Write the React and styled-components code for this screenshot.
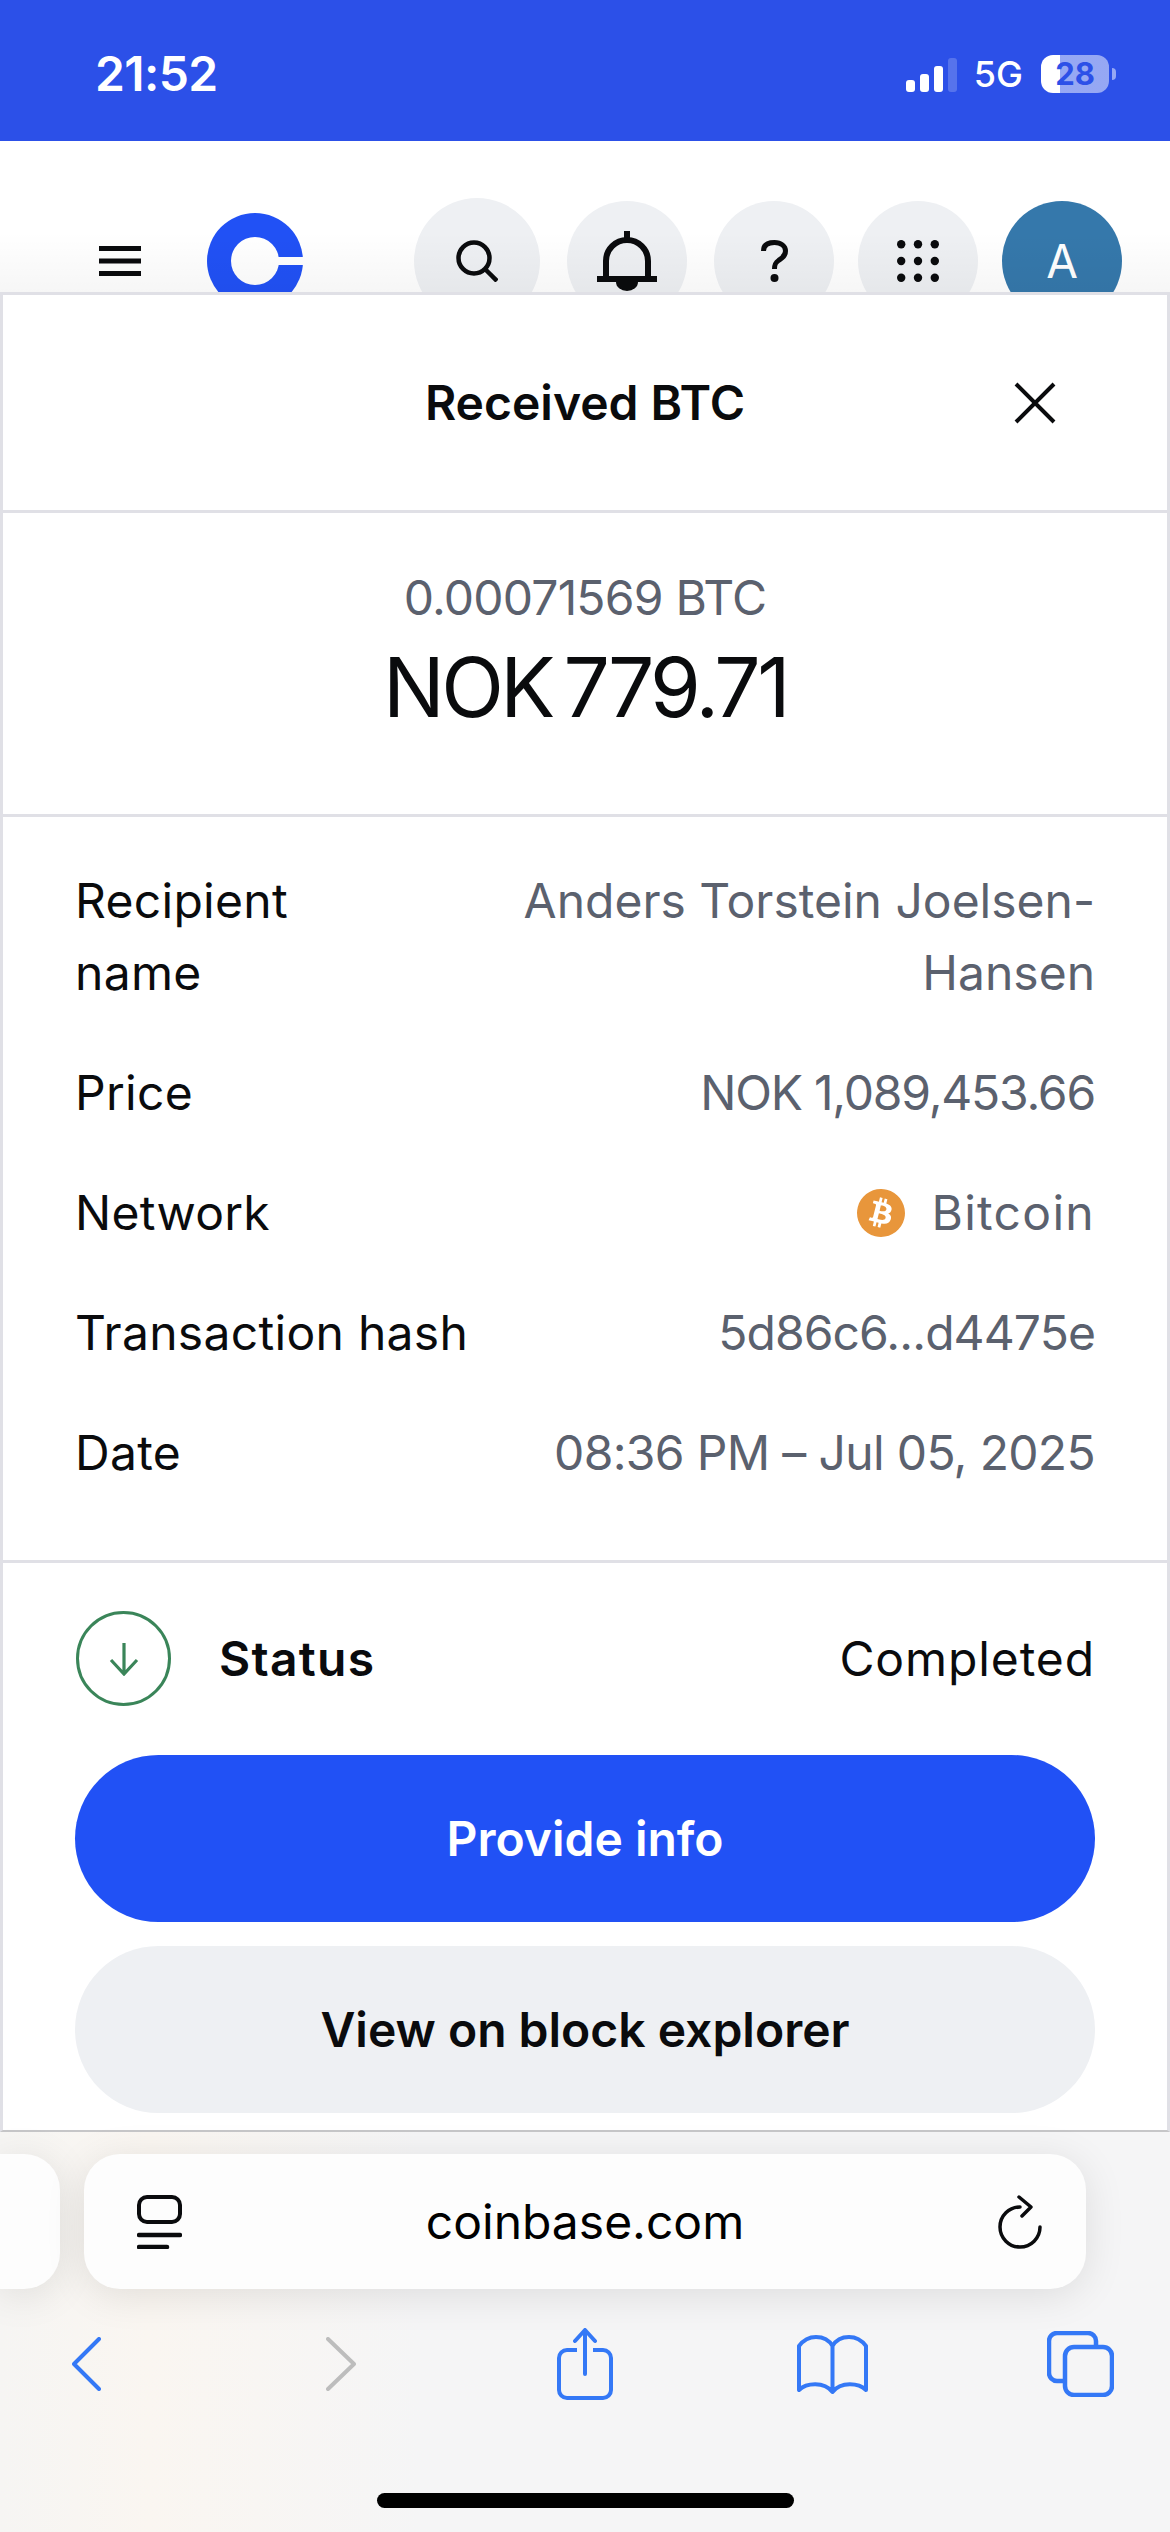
import styled, { createGlobalStyle } from 'styled-components';
import { SiBitcoin } from 'react-icons/si';

const GlobalStyle = createGlobalStyle`
  html, body {
    margin: 0;
    padding: 0;
    background: #fff;
    font-family: Inter, "Liberation Sans", sans-serif;
    color: #0a0b0d;
  }
`;

const details = [
  { label: <>Recipient<br />name</>, value: 'Anders Torstein Joelsen-Hansen' },
  { label: 'Price', value: 'NOK 1,089,453.66', tracking: -1.2 },
  { label: 'Network', value: 'Bitcoin', tracking: 1.3, coin: true },
  { label: 'Transaction hash', value: '5d86c6...d4475e', tracking: -0.9 },
  { label: 'Date', value: '08:36 PM – Jul 05, 2025', tracking: -0.66 },
];

const gridDots = [4.2, 21, 37.8];

function App() {
  return (
    <Page>
      <GlobalStyle />
      <StatusBar>
        <Clock>21:52</Clock>
        <StatusRight>
          <Signal>
            <SignalBar $h={12} />
            <SignalBar $h={18} />
            <SignalBar $h={26} />
            <SignalBar $h={34} $dim />
          </Signal>
          <NetworkType>5G</NetworkType>
          <Battery>
            <BatteryBody>28</BatteryBody>
            <BatteryNub />
          </Battery>
        </StatusRight>
      </StatusBar>

      <Header>
        <HeaderRow>
          <svg width="42" height="30" viewBox="0 0 42 30">
            <rect width="42" height="5" fill="#0a0b0d" />
            <rect y="12.5" width="42" height="5" fill="#0a0b0d" />
            <rect y="25" width="42" height="5" fill="#0a0b0d" />
          </svg>
          <LogoWrap>
            <svg width="96" height="96" viewBox="0 0 96 96">
              <circle cx="48" cy="48" r="48" fill="#2151f5" />
              <circle cx="48" cy="48" r="24" fill="#fff" />
              <rect x="60" y="44" width="36" height="8" fill="#fff" />
            </svg>
          </LogoWrap>
          <HeaderActions>
            <RoundButton $size={126} $after={3}>
              <svg width="42" height="42" viewBox="0 0 42 42" fill="none" stroke="#0a0b0d" strokeWidth="4.5">
                <circle cx="18" cy="18" r="15.5" />
                <path d="M29 29 L41 41" />
              </svg>
            </RoundButton>
            <RoundButton $size={120} $after={3}>
              <svg width="60" height="60" viewBox="0 0 60 60">
                <rect x="27" width="6" height="10" fill="#0a0b0d" />
                <path d="M9 48 V30 a21 21 0 0 1 42 0 V48" fill="none" stroke="#0a0b0d" strokeWidth="6" />
                <rect y="45" width="60" height="6" fill="#0a0b0d" />
                <path d="M19 51 a11 9 0 0 0 22 0 Z" fill="#0a0b0d" />
              </svg>
            </RoundButton>
            <RoundButton $size={120}>
              <svg width="27" height="42" viewBox="0 0 27 42" fill="none">
                <path d="M2.5 11 C2.5 5 7 2.5 13.5 2.5 C20 2.5 24.5 6 24.5 11 C24.5 16 21 18 17.5 20.5 C14.5 22.5 13.5 24 13.5 29" stroke="#0a0b0d" strokeWidth="5" />
                <circle cx="13.5" cy="38" r="4" fill="#0a0b0d" />
              </svg>
            </RoundButton>
            <RoundButton $size={120}>
              <svg width="42" height="42" viewBox="0 0 42 42" fill="#0a0b0d">
                {gridDots.flatMap((y) =>
                  gridDots.map((x) => <circle key={`${x}-${y}`} cx={x} cy={y} r="4.2" />)
                )}
              </svg>
            </RoundButton>
            <Avatar>A</Avatar>
          </HeaderActions>
        </HeaderRow>
      </Header>

      <Modal>
        <TitleBar>
          <span />
          <Title>Received BTC</Title>
          <CloseIcon width="42" height="42" viewBox="0 0 42 42" fill="none" stroke="#0a0b0d" strokeWidth="4">
            <path d="M2 2 L40 40 M40 2 L2 40" />
          </CloseIcon>
        </TitleBar>

        <AmountBlock>
          <CryptoAmount>0.00071569 BTC</CryptoAmount>
          <FiatAmount>NOK 779.71</FiatAmount>
        </AmountBlock>

        <DetailList>
          {details.map((row, i) => (
            <DetailRow key={i}>
              <DetailLabel>{row.label}</DetailLabel>
              <DetailValue $tracking={row.tracking || 0}>
                {row.coin && (
                  <CoinBadge>
                    <SiBitcoin size={48} color="#e8963b" />
                  </CoinBadge>
                )}
                {row.value}
              </DetailValue>
            </DetailRow>
          ))}
        </DetailList>

        <Footer>
          <StatusRow>
            <StatusCircle>
              <svg width="30" height="34" viewBox="0 0 30 34" fill="none" stroke="#3a8559" strokeWidth="3.2">
                <path d="M15 1 V31 M2 18 L15 32 L28 18" />
              </svg>
            </StatusCircle>
            <StatusLabel>Status</StatusLabel>
            <StatusValue>Completed</StatusValue>
          </StatusRow>
          <ActionButton $primary>Provide info</ActionButton>
          <ActionButton>View on block explorer</ActionButton>
        </Footer>
      </Modal>

      <BrowserChrome>
        <UrlRow>
          <PrevTab />
          <UrlBar>
            <PagesIcon width="45" height="54" viewBox="0 0 45 54" fill="none" stroke="#0a0b0d" strokeWidth="4">
              <rect x="2" y="2" width="41" height="25" rx="8" />
              <path d="M2 40 H43" strokeWidth="4.5" strokeLinecap="round" />
              <path d="M2 52 H30" strokeWidth="4.5" strokeLinecap="round" />
            </PagesIcon>
            <UrlText>coinbase.com</UrlText>
            <ReloadIcon width="44" height="54" viewBox="0 0 44 54" fill="none" stroke="#0a0b0d" strokeWidth="3.5" strokeLinecap="round" strokeLinejoin="round">
              <path d="M42 32 A20 20 0 1 1 22 12" />
              <path d="M21 2 L33 12 L24 21" />
            </ReloadIcon>
          </UrlBar>
        </UrlRow>

        <Toolbar>
          <svg width="29" height="54" viewBox="0 0 29 54" fill="none" stroke="#3478f6" strokeWidth="4" strokeLinecap="round" strokeLinejoin="round">
            <path d="M27 2 L2 27 L27 52" />
          </svg>
          <svg width="30" height="54" viewBox="0 0 30 54" fill="none" stroke="#bdbdbd" strokeWidth="4" strokeLinecap="round" strokeLinejoin="round">
            <path d="M2 2 L28 27 L2 52" />
          </svg>
          <svg width="56" height="72" viewBox="0 0 56 72" fill="none" stroke="#3478f6" strokeWidth="4" strokeLinejoin="round" strokeLinecap="round">
            <path d="M20 22 H10 a8 8 0 0 0 -8 8 V62 a8 8 0 0 0 8 8 H46 a8 8 0 0 0 8 -8 V30 a8 8 0 0 0 -8 -8 H36" strokeLinecap="butt" />
            <path d="M28 3 V46 M18 13 L28 2 L38 13" />
          </svg>
          <svg width="71" height="60" viewBox="0 0 71 60" fill="none" stroke="#3478f6" strokeWidth="4" strokeLinejoin="round">
            <path d="M2 12 C8 4 14 3 19 3 C26 3 32 6 35.5 12 C39 6 45 3 52 3 C57 3 63 4 69 12 V56 C62 49 44 47 35.5 58 C27 47 9 49 2 56 Z M35.5 12 V58" />
          </svg>
          <svg width="67" height="66" viewBox="0 0 67 66" fill="none" stroke="#3478f6" strokeWidth="4.5">
            <path d="M16 50 H10 a8 8 0 0 1 -8 -8 V10 a8 8 0 0 1 8 -8 H41 a8 8 0 0 1 8 8 V14" />
            <rect x="18" y="16" width="47" height="48" rx="9" />
          </svg>
        </Toolbar>

        <HomeIndicator />
      </BrowserChrome>
    </Page>
  );
}

const Page = styled.div`
  width: 1170px;
  height: 2532px;
  display: flex;
  flex-direction: column;
  overflow: hidden;
  background: #fff;
`;

const StatusBar = styled.div`
  flex: 0 0 141px;
  display: flex;
  align-items: flex-start;
  justify-content: space-between;
  padding: 0 54px 0 95px;
  background: #2c50e8;
  color: #fff;
  box-sizing: border-box;
`;

const Clock = styled.div`
  margin-top: 46px;
  font-size: 48px;
  line-height: 56px;
  font-weight: 600;
  letter-spacing: -0.6px;
`;

const StatusRight = styled.div`
  display: flex;
  align-items: center;
  margin-top: 55px;
  height: 38px;
`;

const Signal = styled.div`
  display: flex;
  align-items: flex-end;
  gap: 5px;
  height: 34px;
  margin-top: 2px;
`;

const SignalBar = styled.div`
  width: 9px;
  height: ${(p) => p.$h}px;
  border-radius: 3px;
  background: ${(p) => (p.$dim ? 'rgba(255, 255, 255, 0.2)' : '#fff')};
`;

const NetworkType = styled.div`
  margin: 0 18px 0 17px;
  font-size: 36px;
  line-height: 38px;
  font-weight: 500;
`;

const Battery = styled.div`
  display: flex;
  align-items: center;
  gap: 3px;
`;

const BatteryBody = styled.div`
  width: 68px;
  height: 38px;
  border-radius: 12px;
  background: linear-gradient(90deg, #fff 28%, rgba(255, 255, 255, 0.5) 28%);
  color: #2c50e8;
  font-size: 31px;
  line-height: 38px;
  font-weight: 700;
  text-align: center;
`;

const BatteryNub = styled.div`
  width: 4px;
  height: 12px;
  border-radius: 0 6px 6px 0;
  background: rgba(255, 255, 255, 0.5);
`;

const Header = styled.div`
  position: relative;
  flex: 0 0 151px;
  overflow: hidden;
  padding: 57px 48px 0 99px;
  box-sizing: border-box;

  &::after {
    content: '';
    position: absolute;
    left: 0;
    right: 0;
    bottom: 0;
    height: 60px;
    background: linear-gradient(rgba(0, 0, 0, 0), rgba(0, 0, 0, 0.035));
  }
`;

const HeaderRow = styled.div`
  display: flex;
  align-items: center;
  height: 126px;
`;

const LogoWrap = styled.div`
  display: flex;
  margin-left: 66px;
`;

const HeaderActions = styled.div`
  display: flex;
  align-items: center;
  gap: 24px;
  margin-left: auto;
`;

const RoundButton = styled.div`
  display: flex;
  flex: none;
  align-items: center;
  justify-content: center;
  width: ${(p) => p.$size}px;
  height: ${(p) => p.$size}px;
  margin-right: ${(p) => p.$after || 0}px;
  border-radius: 50%;
  background: #eef0f3;
`;

const Avatar = styled.div`
  flex: none;
  width: 120px;
  height: 120px;
  border-radius: 50%;
  background: #3578ab;
  color: #fff;
  font-size: 46px;
  line-height: 120px;
  text-align: center;
`;

const Modal = styled.div`
  flex: 0 0 1840px;
  display: flex;
  flex-direction: column;
  box-sizing: border-box;
  border: 3px solid #e0e0e6;
  border-bottom: 2px solid #c6c6c8;
  background: #fff;
`;

const TitleBar = styled.div`
  flex: 0 0 218px;
  display: grid;
  grid-template-columns: 1fr auto 1fr;
  align-items: center;
  box-sizing: border-box;
  border-bottom: 3px solid #e0e0e6;
`;

const Title = styled.div`
  font-size: 48px;
  line-height: 60px;
  font-weight: 600;
`;

const CloseIcon = styled.svg`
  justify-self: end;
  margin-right: 111px;
`;

const AmountBlock = styled.div`
  flex: 0 0 304px;
  display: flex;
  flex-direction: column;
  align-items: center;
  padding-top: 55px;
  box-sizing: border-box;
  border-bottom: 3px solid #e0e0e6;
`;

const CryptoAmount = styled.div`
  font-size: 48px;
  line-height: 60px;
  letter-spacing: -0.8px;
  color: #5b616e;
`;

const FiatAmount = styled.div`
  margin-top: 10px;
  font-size: 82px;
  line-height: 100px;
  letter-spacing: -3.5px;
  word-spacing: -8px;
`;

const DetailList = styled.div`
  flex: 0 0 746px;
  display: flex;
  flex-direction: column;
  gap: 48px;
  padding: 48px 72px 0;
  box-sizing: border-box;
  border-bottom: 3px solid #e0e0e6;
`;

const DetailRow = styled.div`
  display: flex;
  justify-content: space-between;
  font-size: 48px;
  line-height: 72px;
`;

const DetailLabel = styled.div`
  flex: none;
  letter-spacing: 0.3px;
`;

const DetailValue = styled.div`
  display: flex;
  align-items: center;
  justify-content: flex-end;
  max-width: 600px;
  letter-spacing: ${(p) => p.$tracking}px;
  color: #5b616e;
  text-align: right;
`;

const CoinBadge = styled.span`
  display: flex;
  margin-right: 26px;
  border-radius: 50%;
  background: #fff;
`;

const Footer = styled.div`
  flex: 1;
  display: flex;
  flex-direction: column;
  gap: 24px;
  padding: 48px 72px 15px;
  box-sizing: border-box;
`;

const StatusRow = styled.div`
  display: flex;
  align-items: center;
  height: 95px;
  margin-bottom: 25px;
  font-size: 48px;
`;

const StatusCircle = styled.div`
  display: flex;
  align-items: center;
  justify-content: center;
  flex: none;
  width: 95px;
  height: 95px;
  margin: 0 48px 0 1px;
  box-sizing: border-box;
  border: 3px solid #3a8559;
  border-radius: 50%;
`;

const StatusLabel = styled.div`
  font-weight: 600;
  letter-spacing: 1.3px;
`;

const StatusValue = styled.div`
  margin-left: auto;
  letter-spacing: 0.9px;
`;

const ActionButton = styled.div`
  display: flex;
  align-items: center;
  justify-content: center;
  flex: 0 0 167px;
  border-radius: 84px;
  background: ${(p) => (p.$primary ? '#2151f5' : '#eef0f3')};
  color: ${(p) => (p.$primary ? '#fff' : '#0a0b0d')};
  font-size: 48px;
  font-weight: 600;
`;

const BrowserChrome = styled.div`
  flex: 1;
  display: flex;
  flex-direction: column;
  background: linear-gradient(90deg, #f6f5f3 0, #faf6f1 150px, #f5f5f6 420px);
`;

const UrlRow = styled.div`
  display: flex;
  gap: 24px;
  margin-top: 22px;
`;

const PrevTab = styled.div`
  flex: 0 0 60px;
  height: 135px;
  border-radius: 0 36px 36px 0;
  background: #fdfdfd;
  box-shadow: 0 6px 40px rgba(0, 0, 0, 0.1);
`;

const UrlBar = styled.div`
  flex: 0 0 1002px;
  display: grid;
  grid-template-columns: 1fr auto 1fr;
  align-items: center;
  height: 135px;
  padding: 0 44px;
  box-sizing: border-box;
  border-radius: 36px;
  background: #fdfdfd;
  box-shadow: 0 6px 40px rgba(0, 0, 0, 0.1);
`;

const PagesIcon = styled.svg`
  margin-left: 9px;
`;

const UrlText = styled.div`
  font-size: 48px;
  color: #000;
`;

const ReloadIcon = styled.svg`
  justify-self: end;
`;

const Toolbar = styled.div`
  display: grid;
  grid-template-columns: 172px 338px 150px 344px 152px;
  justify-items: center;
  align-items: center;
  height: 80px;
  margin-top: 35px;
`;

const HomeIndicator = styled.div`
  width: 417px;
  height: 15px;
  margin: 89px auto 0;
  border-radius: 8px;
  background: #000;
`;

export default App;
